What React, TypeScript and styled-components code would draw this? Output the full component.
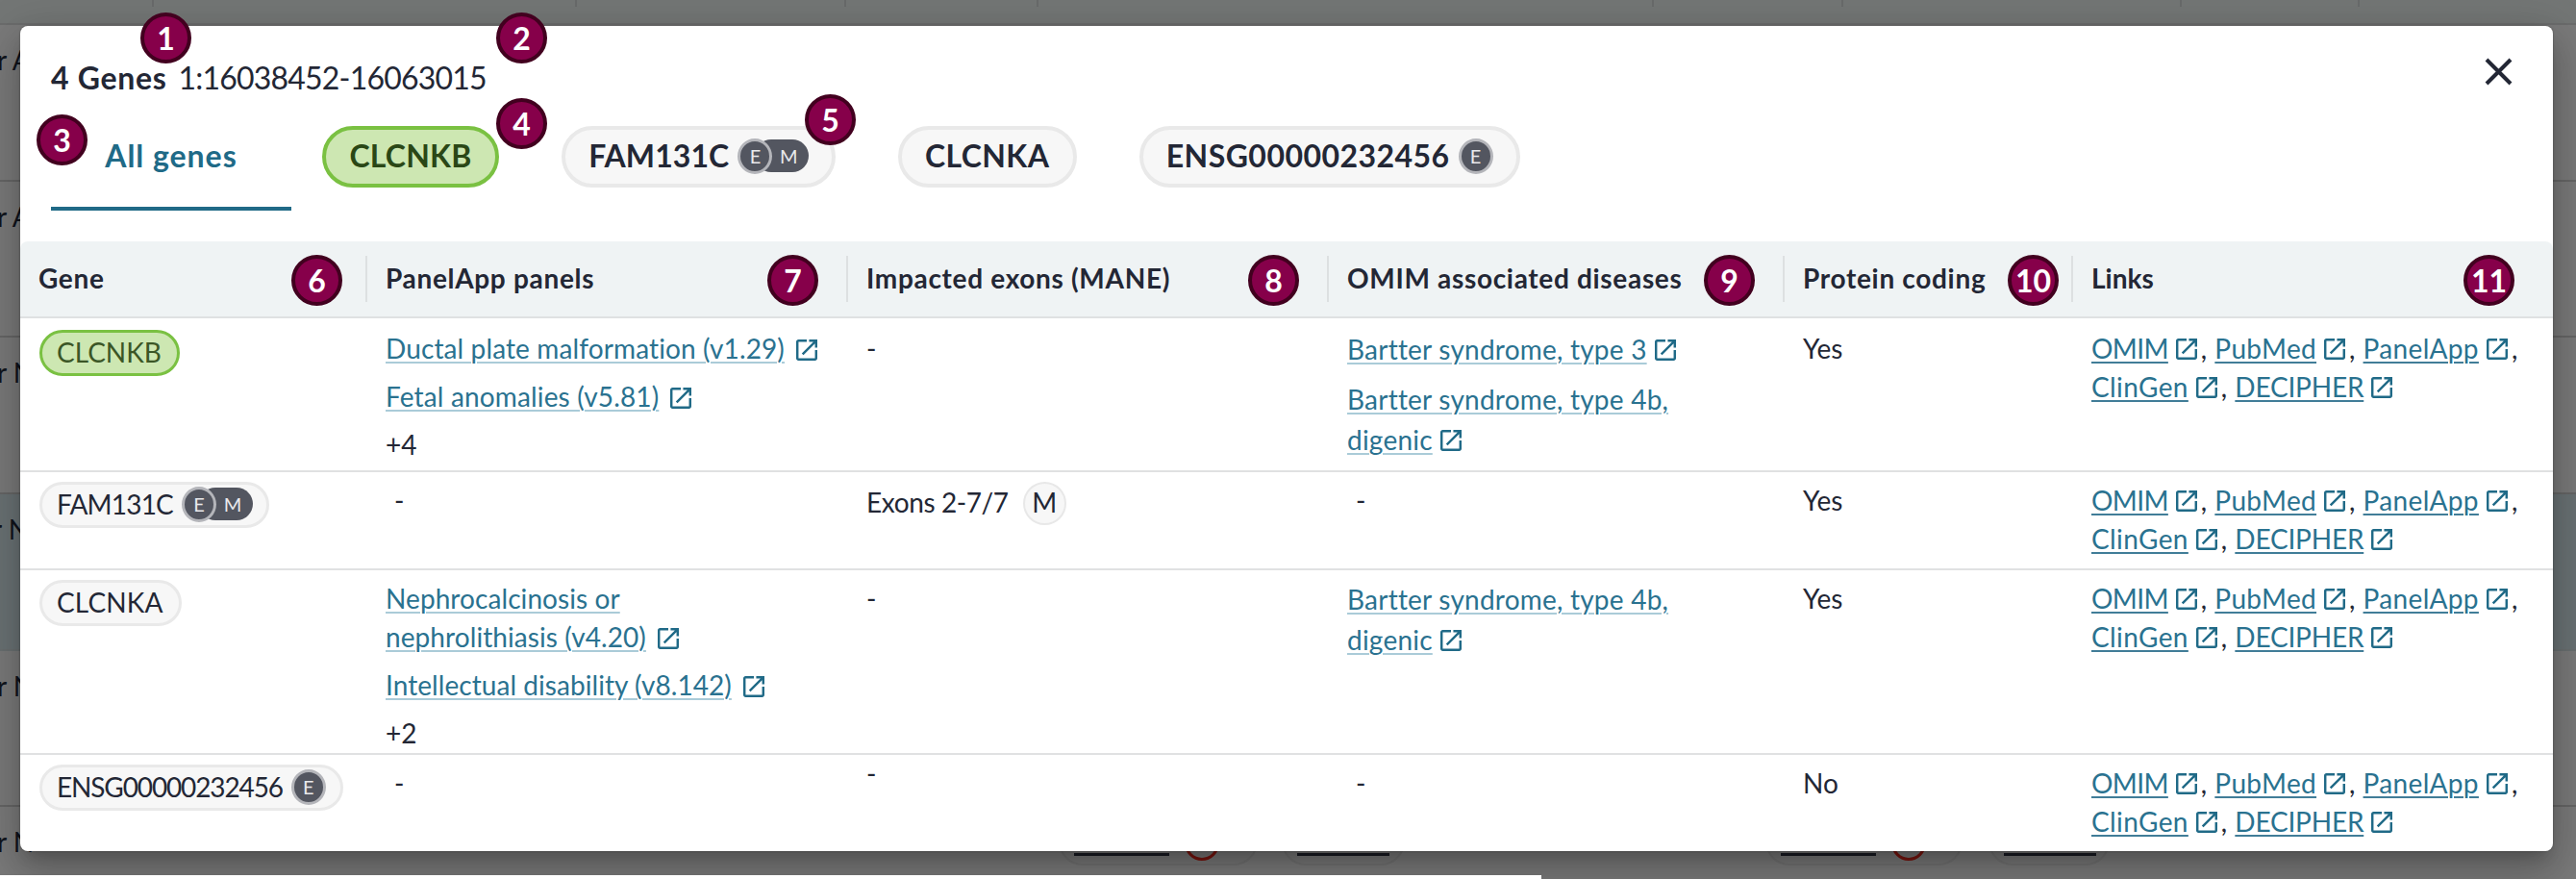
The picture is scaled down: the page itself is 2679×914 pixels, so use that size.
import React from "react";
import styled, { createGlobalStyle } from "styled-components";

const GlobalStyle = createGlobalStyle`
  * { box-sizing: border-box; }
  body { margin: 0; background: #fff; font-family: Lato, "Liberation Sans", sans-serif; color: #232735; }
`;

const Page = styled.div`
  position: relative;
  width: 2679px;
  height: 914px;
  overflow: hidden;
`;

/* ---------- dimmed variants table behind the dialog ---------- */

const Dimmed = styled.div`
  height: 914px;
  overflow: hidden;
  background: #7a7a7a;
`;

const DimHeader = styled.div`
  display: grid;
  grid-template-columns: 160px 440px 280px 200px 640px 197px 352px 185px 225px;
  height: 26px;
  background: #737675;
  border-bottom: 2px solid #6b6c6c;
`;

const DimHeaderCell = styled.div`
  height: 7px;
  border-right: 2px solid #686a6a;
`;

const DimRow = styled.div<{ $active?: boolean }>`
  position: relative;
  height: 162.7px;
  background: ${(p) => (p.$active ? "#6a7274" : "transparent")};
  border-bottom: 2px solid ${(p) => (p.$active ? "#6a6f70" : "#666")};
`;

const DimText = styled.div<{ $shift?: boolean }>`
  width: 60px;
  padding-top: 16px;
  margin-left: ${(p) => (p.$shift ? "-8px" : "-3px")};
  font-size: 28px;
  line-height: 40px;
  color: #11141c;
  white-space: nowrap;
`;

const DimChip = styled.div<{ $left: number; $width: number }>`
  position: absolute;
  left: ${(p) => p.$left}px;
  top: 11px;
  width: ${(p) => p.$width}px;
  height: 50px;
  display: flex;
  align-items: flex-end;
  gap: 16px;
  padding: 0 14px 8px;
  border: 2px solid #727272;
  border-radius: 25px;
  background: #787878;
`;

const DimGene = styled.span<{ $width: number }>`
  display: block;
  width: ${(p) => p.$width}px;
  height: 35px;
  font-size: 28px;
  line-height: 37px;
  white-space: nowrap;
  color: #24272c;
  border-bottom: 3px solid #1a1d24;
`;

const RedRing = styled.span`
  width: 36px;
  height: 36px;
  margin-bottom: -5px;
  border: 3px solid #7a150f;
  border-radius: 50%;
`;

const LoadingBar = styled.div`
  position: absolute;
  left: 0;
  bottom: 0;
  width: 1603px;
  height: 4px;
  background: #fff;
`;

/* ---------- dialog ---------- */

const Dialog = styled.section`
  position: absolute;
  left: 21px;
  top: 27px;
  width: 2634px;
  height: 858px;
  overflow: hidden;
  background: #fff;
  border-radius: 8px;
`;

const DialogShadow = styled.div`
  position: absolute;
  left: 21px;
  top: 27px;
  width: 2634px;
  height: 858px;
  border-radius: 8px;
  box-shadow:
    0 0 2px rgba(0, 0, 0, 0.35),
    0 11px 15px -7px rgba(0, 0, 0, 0.2),
    0 24px 38px 3px rgba(0, 0, 0, 0.14),
    0 9px 46px 8px rgba(0, 0, 0, 0.12);
`;

const TitleRow = styled.header`
  display: flex;
  justify-content: space-between;
  align-items: flex-start;
  padding: 33px 42px 0 32px;
  height: 80px;
`;

const Title = styled.h1`
  margin: 0;
  padding-top: 1px;
  display: flex;
  gap: 12px;
  font-size: 32px;
  line-height: 40px;
  font-weight: 700;
  letter-spacing: 0.7px;
`;

const Region = styled.span`
  font-weight: 400;
  letter-spacing: -0.8px;
`;

const CloseButton = styled.button`
  display: block;
  padding: 0;
  border: 0;
  background: none;
  line-height: 0;
`;

const Tabs = styled.nav`
  display: flex;
  height: 112px;
  margin: 0 0 32px 32px;
`;

const AllTab = styled.div`
  display: flex;
  align-items: center;
  justify-content: center;
  width: 250px;
  border-bottom: 4px solid #206a87;
  color: #206a87;
  font-size: 32px;
  font-weight: 700;
  letter-spacing: 0.95px;
`;

const GeneTab = styled.div`
  display: flex;
  align-items: center;
  padding: 0 32.4px;
`;

const Chip = styled.span<{ $large?: boolean; $green?: boolean; $spacing?: number; $width: number }>`
  display: flex;
  align-items: center;
  gap: 9px;
  width: ${(p) => p.$width}px;
  height: ${(p) => (p.$large ? 64 : 48)}px;
  padding-left: ${(p) => (p.$large ? 24 : 15)}px;
  border: ${(p) => (p.$large ? 4 : 3)}px solid ${(p) => (p.$green ? "#7ac142" : "#e9e9e9")};
  border-radius: 32px;
  background: ${(p) => (p.$green ? "#cde7b2" : "#f7f7f7")};
  color: ${(p) => (p.$green ? (p.$large ? "#2a4716" : "#3b5626") : "#232735")};
  font-size: ${(p) => (p.$large ? 32 : 28)}px;
  line-height: 40px;
  font-weight: ${(p) => (p.$large ? 700 : 400)};
  letter-spacing: ${(p) => p.$spacing ?? 0}px;
  white-space: nowrap;
`;

const ChipLabel = styled.span<{ $large?: boolean }>`
  padding-bottom: ${(p) => (p.$large ? 3 : 3)}px;
`;

const Flags = styled.span`
  display: flex;
  align-items: center;
  margin-top: -2px;
  font-size: 20px;
  font-weight: 400;
  letter-spacing: 0;
  color: #e9e9ec;
`;

const FlagE = styled.span`
  position: relative;
  z-index: 1;
  display: flex;
  align-items: center;
  justify-content: center;
  width: 36px;
  height: 37px;
  padding-bottom: 1px;
  border: 3px solid #b4b5ba;
  border-radius: 50%;
  background: #535660;
`;

const FlagM = styled.span`
  display: flex;
  align-items: center;
  justify-content: center;
  width: 56px;
  height: 34px;
  margin-left: -18px;
  padding: 0 0 1px 14px;
  border-radius: 17px;
  background: #535660;
`;

const columns = "361px 500px 500px 474px 300px 1fr";

const HeadRow = styled.div`
  display: grid;
  grid-template-columns: ${columns};
  align-items: center;
  height: 80px;
  border-bottom: 2px solid #dfe1e2;
  background: #eff3f4;
  border-radius: 8px 8px 0 0;
`;

const HeadCell = styled.div`
  height: 48px;
  padding: 3px 0 0 19px;
  border-right: 2px solid #dde0e1;
  font-size: 28px;
  line-height: 40px;
  font-weight: 700;
  letter-spacing: 0.68px;
  white-space: nowrap;

  &:last-child {
    border-right: 0;
    letter-spacing: 0;
  }
`;

const Row = styled.div<{ $height: number; $first?: boolean }>`
  display: grid;
  grid-template-columns: ${columns};
  height: ${(p) => p.$height}px;
  padding-top: ${(p) => (p.$first ? 10 : 8)}px;
  border-bottom: 2px solid #e0e1e2;
  font-size: 28px;

  &:last-child {
    border-bottom: 0;
  }
`;

const Cell = styled.div<{ $line?: number; $indent?: boolean }>`
  display: flex;
  flex-direction: column;
  align-items: flex-start;
  gap: 10px;
  padding: 1px 0 0 ${(p) => (p.$indent ? 28 : 19)}px;
  line-height: ${(p) => p.$line ?? 40}px;
  white-space: nowrap;
`;

const GeneCell = styled.div`
  padding: 2px 0 0 20px;
`;

const RaisedDash = styled.span`
  margin-top: -10px;
`;

const Reference = styled.div<{ $spacing?: number }>`
  color: #2a7290;
  letter-spacing: ${(p) => p.$spacing ?? 0.15}px;
`;

const SoftLink = styled.a`
  text-decoration: underline;
  text-decoration-color: #aacbd8;
  text-decoration-thickness: 2px;
  text-underline-offset: 3px;
`;

const IconSvg = styled.svg<{ $gap: number; $drop: number }>`
  width: 22px;
  height: 22px;
  margin-left: ${(p) => p.$gap}px;
  vertical-align: -${(p) => p.$drop}px;
  fill: #206a87;
`;

const Exons = styled.div`
  display: flex;
  align-items: center;
  gap: 15px;
  margin-top: 1px;
  letter-spacing: -0.4px;
`;

const ExonText = styled.span`
  padding-bottom: 4px;
`;

const ManeBadge = styled.span`
  display: flex;
  align-items: center;
  justify-content: center;
  width: 45px;
  height: 45px;
  padding-bottom: 4px;
  border: 2px solid #e8e8e8;
  border-radius: 50%;
  background: #f7f7f7;
`;

const LinkLine = styled.div`
  display: flex;
`;

const LinkList = styled.div`
  padding: 1px 0 0 19px;
  line-height: 40px;
`;

const LinkItem = styled.span<{ $spacing: number }>`
  letter-spacing: ${(p) => p.$spacing}px;
`;

const StrongLink = styled.a`
  color: #2a7290;
  text-decoration: underline;
  text-decoration-color: #417d98;
  text-decoration-thickness: 2px;
  text-underline-offset: 3px;
`;

const Comma = styled.span`
  display: inline-block;
  width: 18.5px;
  padding-left: 4px;
`;

const Marker = styled.div<{ $x: number; $y: number }>`
  position: absolute;
  left: ${(p) => p.$x - 26.5}px;
  top: ${(p) => p.$y - 26.5}px;
  width: 53px;
  height: 53px;
  display: flex;
  align-items: center;
  justify-content: center;
  border: 4px solid #42001f;
  border-radius: 50%;
  background: #86004a;
  color: #fff;
  font-size: 32px;
  line-height: 40px;
  font-weight: 700;
`;

const OpenIcon = ({ gap = 8, drop = 1 }: { gap?: number; drop?: number }) => (
  <IconSvg viewBox="3 3 18 18" $gap={gap} $drop={drop}>
    <path d="M19 19H5V5h7V3H5c-1.11 0-2 .9-2 2v14c0 1.1.89 2 2 2h14c1.1 0 2-.9 2-2v-7h-2v7zM14 3v2h3.59l-9.83 9.83 1.41 1.41L19 6.41V10h2V3h-7z" />
  </IconSvg>
);

type ChipProps = { name: string; width: number; large?: boolean; green?: boolean; spacing?: number; flags?: string };

const GeneChip = ({ name, width, large, green, spacing, flags }: ChipProps) => (
  <Chip $width={width} $large={large} $green={green} $spacing={spacing}>
    <ChipLabel $large={large}>{name}</ChipLabel>
    {flags && (
      <Flags>
        <FlagE>E</FlagE>
        {flags === "EM" && <FlagM>M</FlagM>}
      </Flags>
    )}
  </Chip>
);

const PanelLink = ({ lines, spacing }: { lines: string[]; spacing?: number }) => (
  <Reference $spacing={spacing}>
    {lines.map((line, i) => (
      <div key={line}>
        <SoftLink>{line}</SoftLink>
        {i === lines.length - 1 && <OpenIcon gap={12} drop={2} />}
      </div>
    ))}
  </Reference>
);

const DiseaseLink = ({ lines }: { lines: string[] }) => (
  <Reference $spacing={0.22}>
    {lines.map((line, i) => (
      <div key={line}>
        <SoftLink>{line}</SoftLink>
        {i === lines.length - 1 && <OpenIcon gap={8} />}
      </div>
    ))}
  </Reference>
);

const resources: [string, number][][] = [
  [["OMIM", -0.6], ["PubMed", 0.35], ["PanelApp", 0.35]],
  [["ClinGen", 0.4], ["DECIPHER", -0.2]],
];

const ResourceLinks = () => (
  <LinkList>
    {resources.map((line, row) => (
      <LinkLine key={row}>
        {line.map(([label, spacing]) => (
          <LinkItem key={label} $spacing={spacing}>
            <StrongLink>{label}</StrongLink>
            <OpenIcon />
            {label !== "DECIPHER" && <Comma>,</Comma>}
          </LinkItem>
        ))}
      </LinkLine>
    ))}
  </LinkList>
);

const headings = ["Gene", "PanelApp panels", "Impacted exons (MANE)", "OMIM associated diseases", "Protein coding", "Links"];

const markers: [number, number][] = [
  [172.5, 39.5], [542.5, 39.5], [64.5, 145.5], [542.5, 128.5], [863.5, 124.5], [329.5, 291.5],
  [824.5, 291.5], [1324.5, 291.5], [1798.5, 291.5], [2114.5, 291.5], [2588.5, 291.5],
];

export default function App() {
  return (
    <Page>
      <GlobalStyle />
      <Dimmed>
        <DimHeader>
          {Array.from({ length: 8 }, (_, i) => (
            <DimHeaderCell key={i} />
          ))}
        </DimHeader>
        <DimRow><DimText>r A</DimText></DimRow>
        <DimRow><DimText>r A</DimText></DimRow>
        <DimRow><DimText>r N</DimText></DimRow>
        <DimRow $active><DimText $shift>r N</DimText></DimRow>
        <DimRow><DimText>r N</DimText></DimRow>
        <DimRow>
          <DimText>r N</DimText>
          <DimChip $left={1101} $width={207}><DimGene $width={99}>CTTC3</DimGene><RedRing /></DimChip>
          <DimChip $left={1333} $width={128}><DimGene $width={96}>MYOT2</DimGene></DimChip>
          <DimChip $left={1836} $width={205}><DimGene $width={99}>CTTC3</DimGene><RedRing /></DimChip>
          <DimChip $left={2068} $width={126}><DimGene $width={96}>MYOT2</DimGene></DimChip>
        </DimRow>
      </Dimmed>
      <DialogShadow />
      <LoadingBar />
      <Dialog>
        <TitleRow>
          <Title>
            4 Genes <Region>1:16038452-16063015</Region>
          </Title>
          <CloseButton aria-label="Close">
            <svg width="29" height="29" viewBox="0 0 29 29" fill="none" stroke="#232735" strokeWidth="4">
              <path d="M2 2l25 25M27 2L2 27" />
            </svg>
          </CloseButton>
        </TitleRow>
        <Tabs>
          <AllTab>All genes</AllTab>
          <GeneTab><GeneChip name="CLCNKB" width={184} large green spacing={0.2} /></GeneTab>
          <GeneTab><GeneChip name="FAM131C" width={285} large spacing={0.1} flags="EM" /></GeneTab>
          <GeneTab><GeneChip name="CLCNKA" width={186} large spacing={0.4} /></GeneTab>
          <GeneTab><GeneChip name="ENSG00000232456" width={396} large spacing={0.45} flags="E" /></GeneTab>
        </Tabs>
        <HeadRow>
          {headings.map((h) => (
            <HeadCell key={h}>{h}</HeadCell>
          ))}
        </HeadRow>
        <Row $height={160} $first>
          <GeneCell><GeneChip name="CLCNKB" width={146} green /></GeneCell>
          <Cell>
            <PanelLink lines={["Ductal plate malformation (v1.29)"]} spacing={0.12} />
            <PanelLink lines={["Fetal anomalies (v5.81)"]} />
            <span>+4</span>
          </Cell>
          <Cell>-</Cell>
          <Cell $line={42}>
            <DiseaseLink lines={["Bartter syndrome, type 3"]} />
            <DiseaseLink lines={["Bartter syndrome, type 4b,", "digenic"]} />
          </Cell>
          <Cell>Yes</Cell>
          <ResourceLinks />
        </Row>
        <Row $height={102}>
          <GeneCell><GeneChip name="FAM131C" width={238.5} spacing={-0.8} flags="EM" /></GeneCell>
          <Cell $indent>-</Cell>
          <Cell>
            <Exons>
              <ExonText>Exons 2-7/7</ExonText>
              <ManeBadge>M</ManeBadge>
            </Exons>
          </Cell>
          <Cell $indent>-</Cell>
          <Cell>Yes</Cell>
          <ResourceLinks />
        </Row>
        <Row $height={192}>
          <GeneCell><GeneChip name="CLCNKA" width={148} spacing={0.15} /></GeneCell>
          <Cell>
            <PanelLink lines={["Nephrocalcinosis or", "nephrolithiasis (v4.20)"]} spacing={0.08} />
            <PanelLink lines={["Intellectual disability (v8.142)"]} spacing={0.06} />
            <span>+2</span>
          </Cell>
          <Cell>-</Cell>
          <Cell $line={42}>
            <DiseaseLink lines={["Bartter syndrome, type 4b,", "digenic"]} />
          </Cell>
          <Cell>Yes</Cell>
          <ResourceLinks />
        </Row>
        <Row $height={100}>
          <GeneCell><GeneChip name="ENSG00000232456" width={315.5} spacing={-1.13} flags="E" /></GeneCell>
          <Cell $indent>-</Cell>
          <Cell><RaisedDash>-</RaisedDash></Cell>
          <Cell $indent>-</Cell>
          <Cell>No</Cell>
          <ResourceLinks />
        </Row>
      </Dialog>
      {markers.map(([x, y], i) => (
        <Marker key={i} $x={x} $y={y}>{i + 1}</Marker>
      ))}
    </Page>
  );
}
